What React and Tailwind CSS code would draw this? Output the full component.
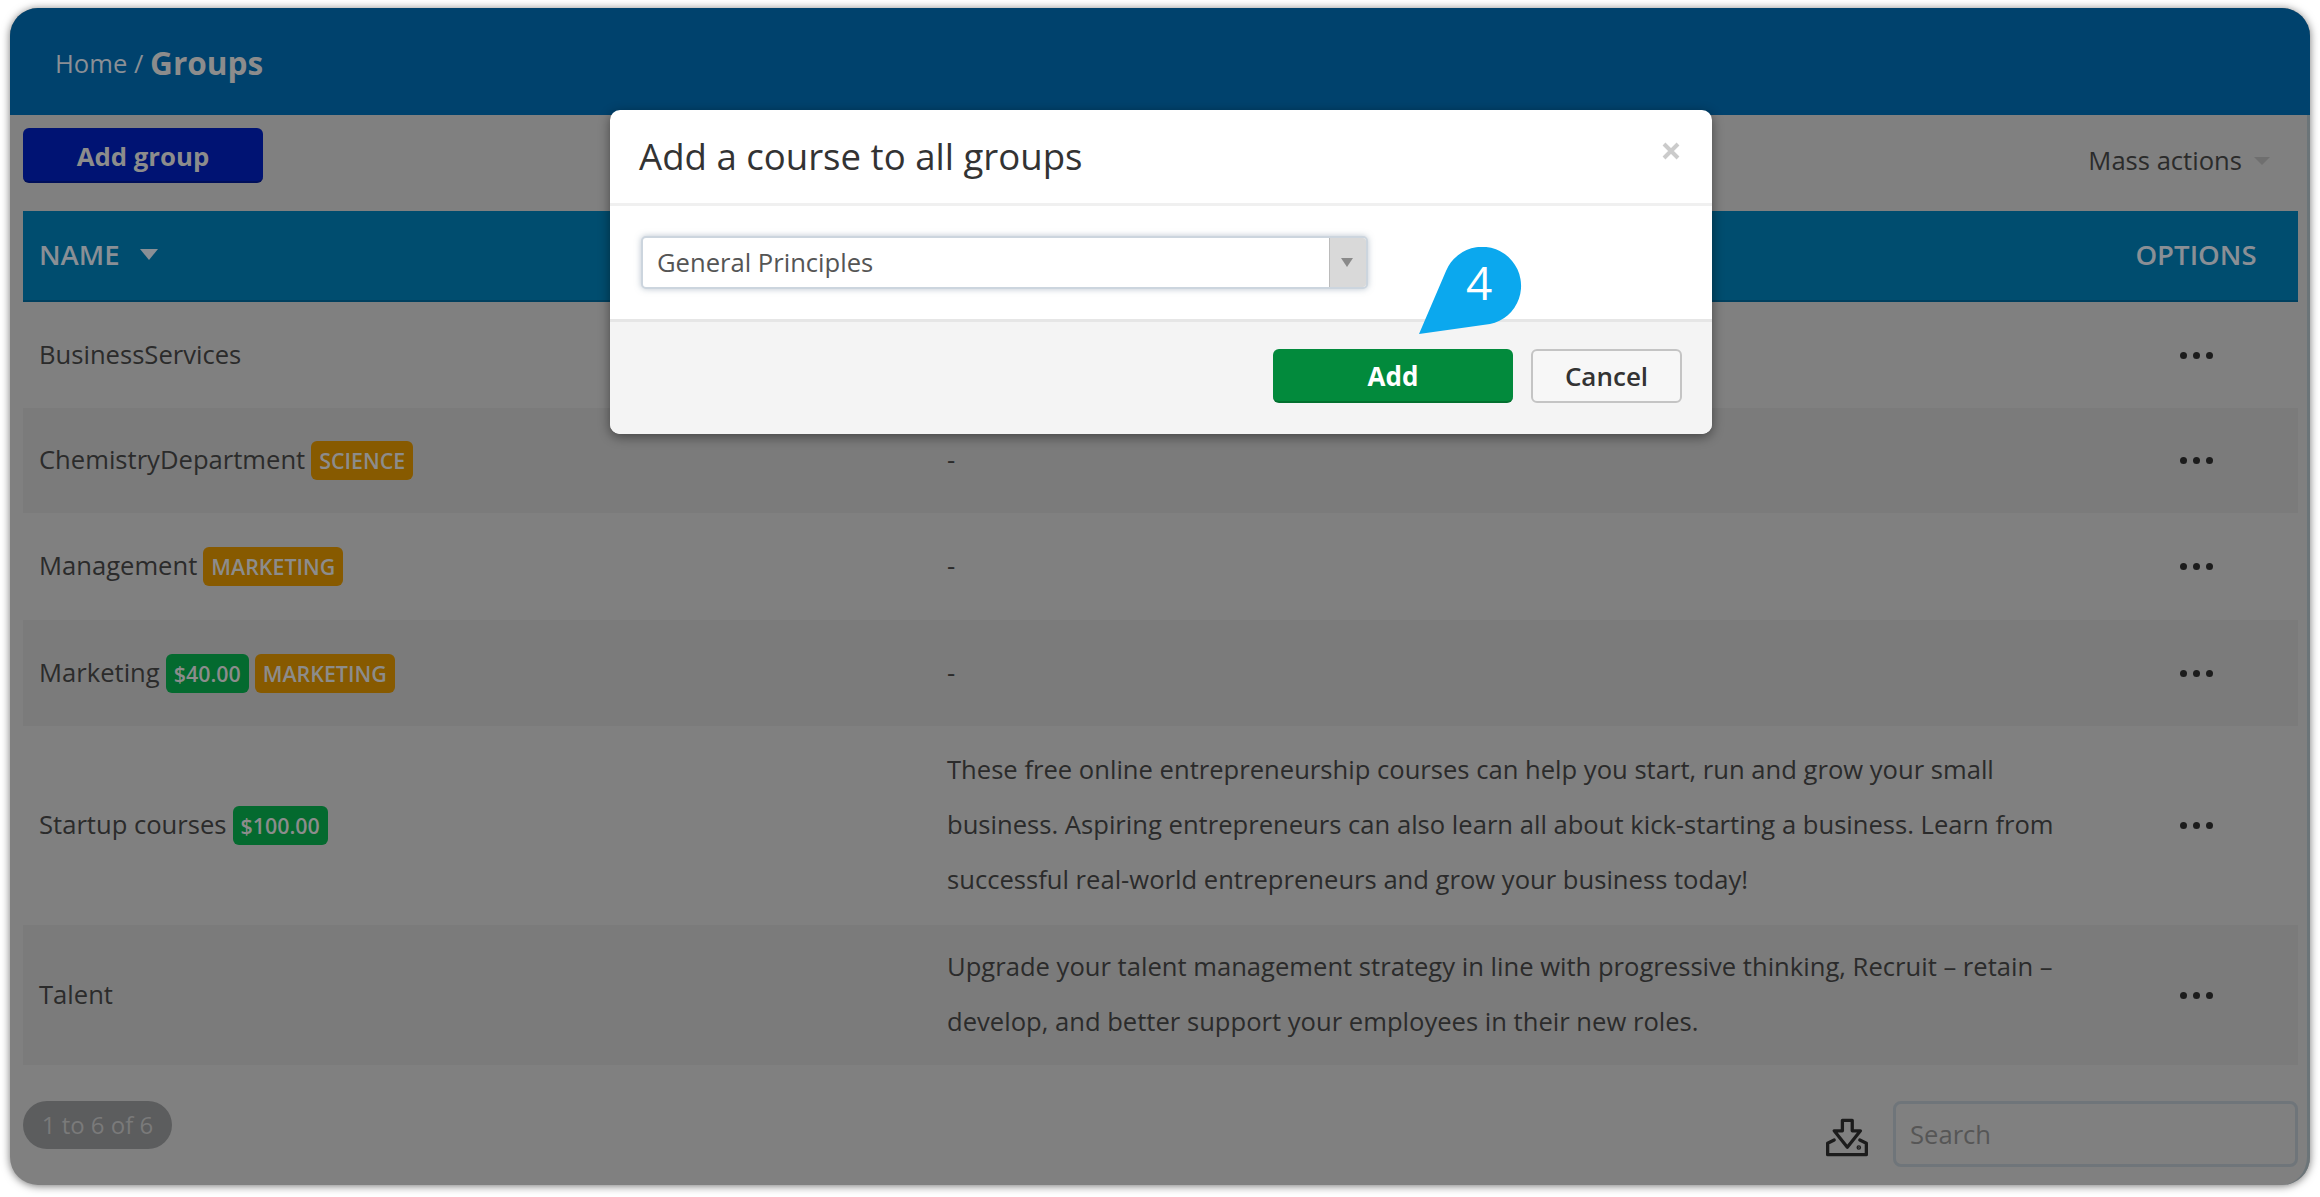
const FONT = "font-['Open_Sans',sans-serif]";

const rows = [
  { name: "BusinessServices", h: "h-[106px]", desc: null },
  { name: "ChemistryDepartment", h: "h-[105px]", tags: [["SCIENCE", "o"]], desc: ["-"], striped: true },
  { name: "Management", h: "h-[107px]", tags: [["MARKETING", "o"]], desc: ["-"] },
  { name: "Marketing", h: "h-[106px]", tags: [["$40.00", "g"], ["MARKETING", "o"]], desc: ["-"], striped: true },
  {
    name: "Startup courses",
    h: "h-[199px]",
    tags: [["$100.00", "g"]],
    desc: [
      "These free online entrepreneurship courses can help you start, run and grow your small",
      "business. Aspiring entrepreneurs can also learn all about kick-starting a business. Learn from",
      "successful real-world entrepreneurs and grow your business today!",
    ],
  },
  {
    name: "Talent",
    h: "h-[140px]",
    desc: [
      "Upgrade your talent management strategy in line with progressive thinking, Recruit – retain –",
      "develop, and better support your employees in their new roles.",
    ],
    striped: true,
  },
];

function Tag({ label, kind }) {
  return (
    <span
      className={`h-[39px] px-[8px] pt-[2px] rounded-[6px] flex items-center text-[21.4px] font-semibold text-[#8c8c8c] ${
        kind === "g" ? "bg-[#046a2f]" : "bg-[#875a00]"
      }`}
    >
      {label}
    </span>
  );
}

function Row({ row }) {
  return (
    <div className={`${row.h} grid grid-cols-[924px_1fr_204px] items-center ${row.striped ? "bg-[#7b7b7b]" : ""}`}>
      <div className="pl-[16px] flex items-center gap-[6px]">
        <span>{row.name}</span>
        {row.tags && row.tags.map((t) => <Tag key={t[0]} label={t[0]} kind={t[1]} />)}
      </div>
      <div className="leading-[55px] -mt-[2px]">
        {row.desc && row.desc.map((l) => <div key={l}>{l}</div>)}
      </div>
      <div className="flex justify-center gap-[6px]">
        <span className="w-[7px] h-[7px] rounded-full bg-[#1c1c1c]" />
        <span className="w-[7px] h-[7px] rounded-full bg-[#1c1c1c]" />
        <span className="w-[7px] h-[7px] rounded-full bg-[#1c1c1c]" />
      </div>
    </div>
  );
}

function DownloadIcon() {
  return (
    <svg className="mt-[16px]" width="45" height="41" viewBox="130 230 135 125" fill="none" stroke="#1c1c1c" strokeWidth="10" strokeLinejoin="round" strokeLinecap="round">
      <path d="M185 240 H215 V272 H240 L200 322 L160 272 H185 Z" />
      <path d="M160 300 L140 310 V345 H258 V310 L238 300" />
      <circle cx="235" cy="323" r="2" fill="#1c1c1c" />
    </svg>
  );
}

function Callout() {
  return (
    <svg className="absolute left-[809px] top-[137px]" width="104" height="90" viewBox="0 0 104 90" fill="#0ba8ee">
      <path d="M0 87 L27 24 A39 39 0 1 1 71 77 Z" />
    </svg>
  );
}

function Modal() {
  return (
    <div className="absolute left-[600px] top-[102px] w-[1102px] h-[324px] bg-white rounded-[10px] shadow-[0_3px_12px_rgba(0,0,0,0.45)] flex flex-col">
      <div className="h-[96px] shrink-0 border-b-[3px] border-[#f0f0f0] pl-[29px] pr-[32px] flex items-center justify-between">
        <span className="text-[36.6px] font-medium text-[#333]">Add a course to all groups</span>
        <svg className="-mt-[12px]" width="18" height="18" viewBox="0 0 18 18" stroke="#cbcbcb" strokeWidth="4"><path d="M2 2 L16 16 M16 2 L2 16" /></svg>
      </div>
      <div className="h-[116px] shrink-0 border-b-[3px] border-[#e6e6e6] pl-[31px] pt-[30px]">
        <div className="w-[727px] h-[53px] flex rounded-[5px] border-2 border-[#ccd5de] shadow-[0_0_6px_rgba(120,140,160,0.5)] bg-white overflow-hidden">
          <div className="flex-1 flex items-center pl-[14px] pt-[2px] text-[25.6px] text-[#555]">General Principles</div>
          <div className="w-[37px] pr-[3px] bg-[#d9d9d9] flex items-center justify-center border-l border-[#bbb]">
            <span className="w-0 h-0 border-x-[6px] border-x-transparent border-t-[9px] border-t-[#8a8a8a]" />
          </div>
        </div>
      </div>
      <div className="flex-1 bg-[#f4f4f4] rounded-b-[10px] flex justify-end items-start pt-[27px] pr-[30px] gap-[18px]">
        <div className="w-[240px] h-[54px] pt-[2px] rounded-[6px] bg-[#028a3c] border-b-2 border-[#02702f] flex items-center justify-center text-white text-[26px] font-bold">Add</div>
        <div className="w-[151px] h-[54px] rounded-[6px] bg-[#f7f7f7] border-2 border-[#c4c4c4] flex items-center justify-center text-[#333] text-[26px] font-semibold">Cancel</div>
      </div>
      <Callout />
      <span className="absolute left-[856px] top-[140px] text-[46px] leading-[64px] font-normal text-white">4</span>
    </div>
  );
}

export default function App() {
  return (
    <div className={`${FONT} bg-white h-[1197px] pt-[8px] px-[10px] text-[25.6px] text-[#2b2b2b]`}>
      <div className="relative w-[2300px] h-[1177px] rounded-[28px] bg-[#808080] shadow-[0_1px_8px_rgba(0,0,0,0.55)]">
        <div className="h-[107px] rounded-t-[28px] bg-[#00426d] pl-[45px] pt-[3px] flex items-center text-[#8a8f95]">
          <span className="text-[25.6px] pt-[2px]">Home /&nbsp;</span>
          <span className="text-[31.6px] font-bold text-[#8c8c8c]">Groups</span>
        </div>
        <div className="h-[1070px] rounded-b-[28px] border-r-[3px] border-[#6b7478] pl-[13px] pr-[9px] flex flex-col">
          <div className="h-[96px] flex items-start justify-between pt-[13px]">
            <div className="w-[240px] h-[55px] pt-[3px] rounded-[6px] bg-[#001373] border-b-2 border-[#000f5a] flex items-center justify-center text-[25.8px] font-bold text-[#8c8c8c]">Add group</div>
            <div className="flex items-center gap-[12px] pr-[28px] pt-[14px] text-[25.6px]">
              <span>Mass actions</span>
              <span className="w-0 h-0 border-x-[8px] border-x-transparent border-t-[8px] border-t-[#6f6f6f]" />
            </div>
          </div>
          <div className="h-[91px] pb-[2px] bg-[#004d6f] border-b-2 border-[#00405f] grid grid-cols-[1fr_204px] items-center text-[27.6px] font-semibold text-[#8a8f95]">
            <div className="pl-[16px] flex items-center gap-[20px]">
              <span>NAME</span>
              <span className="w-0 h-0 border-x-[9px] border-x-transparent border-t-[11px] border-t-[#8a8f95]" />
            </div>
            <div className="text-center">OPTIONS</div>
          </div>
          {rows.map((r) => <Row key={r.name} row={r} />)}
          <div className="flex items-start justify-between pt-[36px]">
            <div className="w-[149px] h-[48px] rounded-full bg-[#5c5d5e] flex items-center justify-center text-[24px] text-[#7a7a7a]">1 to 6 of 6</div>
            <div className="flex items-start gap-[24px]">
              <DownloadIcon />
              <div className="w-[405px] h-[66px] pt-[2px] rounded-[8px] border-[3px] border-[#6f757a] pl-[14px] flex items-center text-[#565656]">Search</div>
            </div>
          </div>
        </div>
        <Modal />
      </div>
    </div>
  );
}
